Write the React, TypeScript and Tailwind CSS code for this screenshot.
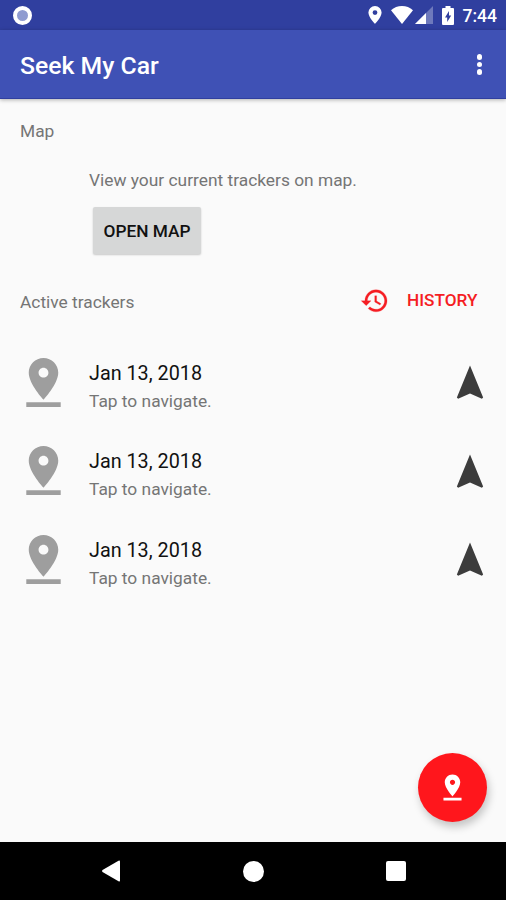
const PIN_DROP =
  "M18 8c0-3.31-2.69-6-6-6S6 4.69 6 8c0 4.5 6 11 6 11s6-6.5 6-11zm-8 0c0-1.1.9-2 2-2s2 .9 2 2-.89 2-2 2c-1.1 0-2-.9-2-2zM5 20v2h14v-2H5z";

interface Tracker {
  id: number;
  date: string;
}

const trackers: Tracker[] = [
  { id: 1, date: "Jan 13, 2018" },
  { id: 2, date: "Jan 13, 2018" },
  { id: 3, date: "Jan 13, 2018" },
];

function StatusBar() {
  return (
    <div className="flex h-[30px] shrink-0 items-center justify-between bg-[#303f9f] pl-[13px] pr-[9px] text-white">
      <span className="size-[19px] rounded-full border-4 border-white bg-[#8f9bd0]" />
      <div className="flex items-center">
        <svg viewBox="0 0 14 18" className="mr-[9px] h-[18px] w-[14px]" fill="currentColor">
          <path
            fillRule="evenodd"
            d="M7 0a6.6 6.6 0 0 0-6.6 6.6C.4 11.2 7 18 7 18s6.6-6.8 6.6-11.4A6.6 6.6 0 0 0 7 0zm0 4.2a2.4 2.4 0 1 1 0 4.8 2.4 2.4 0 0 1 0-4.8z"
          />
        </svg>
        <svg viewBox="0 0 22 18" className="mr-[2px] h-[18px] w-[22px]" fill="currentColor">
          <path d="M11 18 0 4.2C3 1.5 6.8 0 11 0s8 1.5 11 4.2z" />
        </svg>
        <svg viewBox="0 0 18 18" className="mr-[9px] size-[18px]" fill="currentColor">
          <path d="M18 0v18H0z" opacity=".3" />
          <path d="M11 7v11H0z" />
        </svg>
        <svg viewBox="0 0 12 19" className="mr-[9px] h-[19px] w-[12px]" fill="currentColor">
          <path
            fillRule="evenodd"
            d="M3.5 0h5v2H11a1 1 0 0 1 1 1v15a1 1 0 0 1-1 1H1a1 1 0 0 1-1-1V3a1 1 0 0 1 1-1h2.5zM7 5l-4 6.5h2.2V16l4-6.5H7z"
          />
        </svg>
        <span className="pt-[3px] text-[17.5px] font-medium leading-none">7:44</span>
      </div>
    </div>
  );
}

function TrackerRow({ date }: { date: string }) {
  return (
    <li className="flex h-[88.6px] items-center">
      <svg viewBox="0 0 24 24" className="ml-[14px] size-[59px]" fill="#9e9e9e">
        <path d={PIN_DROP} />
      </svg>
      <div className="ml-[16px] flex-1 pt-[9px]">
        <p className="text-[19.8px] leading-[29px] text-[#111111]">{date}</p>
        <p className="text-[17.35px] leading-[27.6px] text-[#757575]">Tap to navigate.</p>
      </div>
      <svg viewBox="0 0 24 24" className="mr-[15px] mt-[2px] size-[42px]" fill="#3c3c3c">
        <path d="M12 2L4.5 20.29l.71.71L12 18l6.79 3 .71-.71z" />
      </svg>
    </li>
  );
}

function NavigationBar() {
  return (
    <div className="flex h-[58px] shrink-0 items-center justify-between bg-black pl-[101px] pr-[100px]">
      <svg viewBox="0 0 20 22" className="h-[22px] w-[20px]" fill="white">
        <path d="M17.5.8Q19 0 19 1.5v19Q19 22 17.5 21.2L1.5 12Q.5 11 1.5 10z" />
      </svg>
      <span className="size-[21px] rounded-full bg-white" />
      <span className="size-[20px] rounded-[2px] bg-white" />
    </div>
  );
}

export default function App() {
  return (
    <div className="relative flex h-[900px] w-[506px] flex-col overflow-hidden bg-[#fafafa] font-['Roboto',sans-serif]">
      <StatusBar />
      <header className="flex h-[69px] shrink-0 items-center justify-between border-b border-[#303f9f] bg-[#3f51b5] pl-[20px] pr-[24px] text-white shadow-[0_1px_4px_rgba(0,0,0,0.3)]">
        <h1 className="pt-[4px] text-[24.75px] font-medium leading-none">Seek My Car</h1>
        <button className="flex flex-col gap-[2px] pt-[1px]">
          <span className="size-[5.5px] rounded-full bg-white" />
          <span className="size-[5.5px] rounded-full bg-white" />
          <span className="size-[5.5px] rounded-full bg-white" />
        </button>
      </header>

      <main className="flex-1">
        <h2 className="pl-[20px] pt-[20px] text-[17.35px] leading-[24px] text-[#757575]">Map</h2>
        <div className="pl-[89px] pt-[25px]">
          <p className="text-[17.35px] leading-[24px] text-[#757575]">
            View your current trackers on map.
          </p>
          <button className="ml-[4px] mt-[15px] h-[47px] w-[108px] rounded-[2px] bg-[#d6d7d7] pt-[2px] text-[17.3px] font-medium text-[#111111] shadow-[0_1px_2px_rgba(0,0,0,0.2)]">
            OPEN MAP
          </button>
        </div>

        <div className="mt-[16px] flex h-[60px] items-center pl-[20px] pr-[28.5px]">
          <h2 className="flex-1 pt-[3px] text-[17.35px] leading-[24px] text-[#757575]">
            Active trackers
          </h2>
          <button className="flex items-center pt-[1px] text-[17.2px] font-medium text-[#f51d23]">
            <svg
              viewBox="0 0 24 24"
              className="mr-[18px] size-[29.5px]"
              fill="currentColor"
              stroke="currentColor"
              strokeWidth={0.2}
            >
              <path d="M13 3c-4.97 0-9 4.03-9 9H1l3.89 3.89.07.14L9 12H6c0-3.87 3.13-7 7-7s7 3.13 7 7-3.13 7-7 7c-1.93 0-3.68-.79-4.94-2.06l-1.42 1.42C8.27 19.99 10.51 21 13 21c4.97 0 9-4.03 9-9s-4.03-9-9-9zm-1 5v5l4.28 2.54.72-1.21-3.5-2.08V8H12z" />
            </svg>
            <span className="pt-[1px]">HISTORY</span>
          </button>
        </div>

        <ul className="mt-[8px]">
          {trackers.map((tracker) => (
            <TrackerRow key={tracker.id} date={tracker.date} />
          ))}
        </ul>
      </main>

      {/* Floating add button */}
      <button className="absolute bottom-[78px] right-[19px] flex size-[69px] items-center justify-center rounded-full bg-[#ff161c] pb-[1px] shadow-[2px_5px_8px_rgba(0,0,0,0.22)]">
        <svg viewBox="0 0 24 24" className="size-[31px]" fill="white">
          <path d={PIN_DROP} />
        </svg>
      </button>

      <NavigationBar />
    </div>
  );
}
